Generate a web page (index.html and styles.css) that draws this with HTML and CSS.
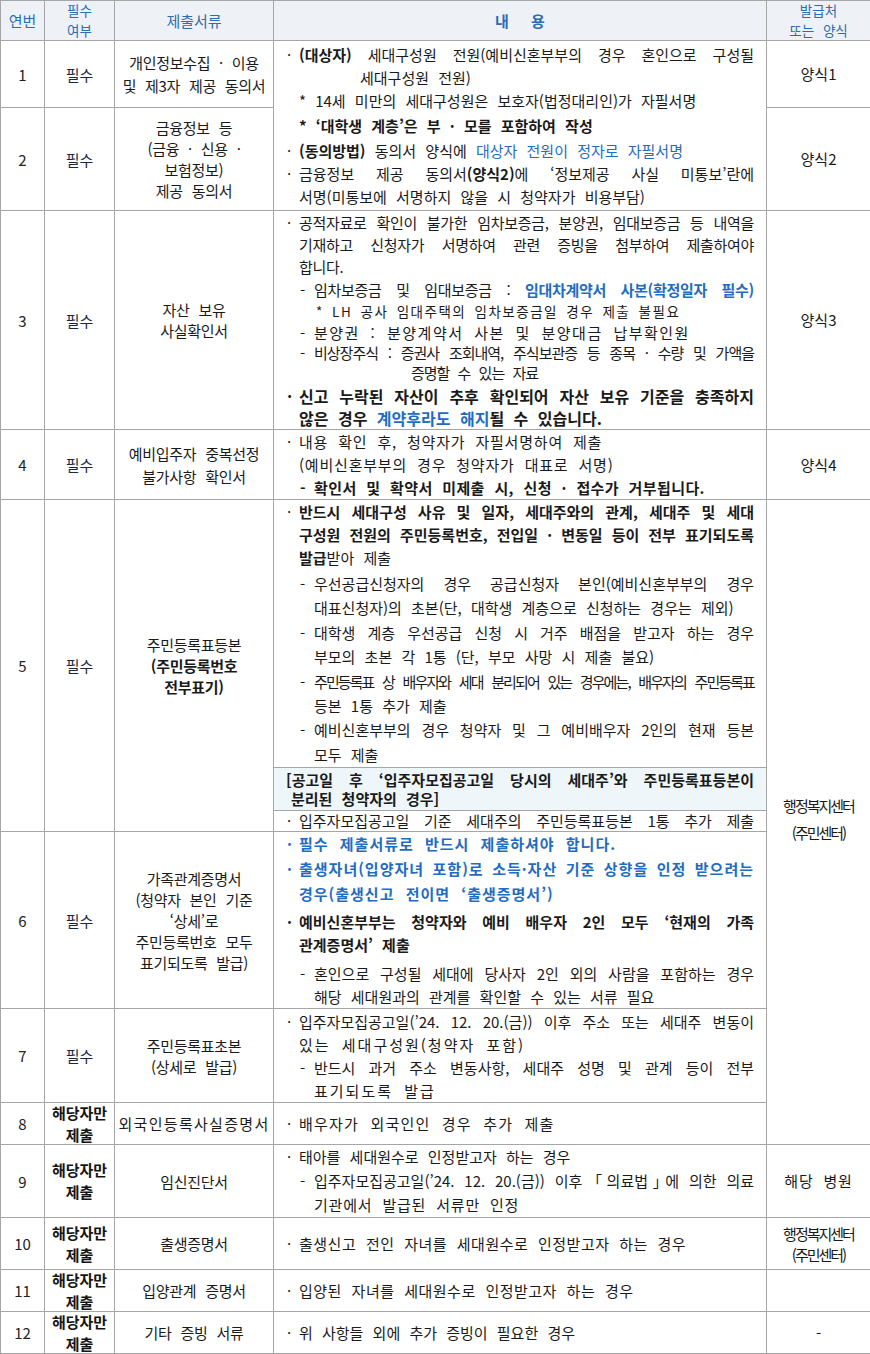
FILE: index.html
```html
<!DOCTYPE html>
<html lang="ko">
<head>
<meta charset="utf-8">
<title>제출서류 안내</title>
<link rel="stylesheet" href="styles.css">
</head>
<body>
<table class="doc">
  <colgroup>
    <col class="c-no"><col class="c-req"><col class="c-name"><col class="c-body"><col class="c-src">
  </colgroup>
  <thead>
    <tr class="r-head">
      <th>연번</th>
      <th class="th2">필수<br>여부</th>
      <th>제출서류</th>
      <th class="th-body">내 용</th>
      <th class="th2">발급처<br>또는 양식</th>
    </tr>
  </thead>
  <tbody>
    <tr class="r1">
      <td class="no">1</td>
      <td class="req">필수</td>
      <td class="name lh23">개인정보수집 · 이용<br>및 제3자 제공 동의서</td>
      <td class="ct lh23" rowspan="2">
        <div class="it"><span class="mk">·</span><div class="tx">
          <span class="l j"><b>(대상자)</b> 세대구성원 전원(예비신혼부부의 경우 혼인으로 구성될</span>
          <span class="l ind-a">세대구성원 전원)</span>
          <span class="l">* 14세 미만의 세대구성원은 보호자(법정대리인)가 자필서명</span>
          <span class="l mt2"><b>* ‘대학생 계층’은 부 · 모를 포함하여 작성</b></span>
        </div></div>
        <div class="it mt2"><span class="mk">·</span><div class="tx">
          <span class="l"><b>(동의방법)</b> 동의서 양식에 <span class="blue">대상자 전원이 정자로 자필서명</span></span>
        </div></div>
        <div class="it"><span class="mk">·</span><div class="tx">
          <span class="l j">금융정보 제공 동의서<b>(양식2)</b>에 ‘정보제공 사실 미통보’란에</span>
          <span class="l">서명(미통보에 서명하지 않을 시 청약자가 비용부담)</span>
        </div></div>
      </td>
      <td class="src">양식1</td>
    </tr>
    <tr class="r2">
      <td class="no">2</td>
      <td class="req">필수</td>
      <td class="name">금융정보 등<br>(금융 · 신용 ·<br>보험정보)<br>제공 동의서</td>
      <td class="src">양식2</td>
    </tr>
    <tr class="r3">
      <td class="no">3</td>
      <td class="req">필수</td>
      <td class="name">자산 보유<br>사실확인서</td>
      <td class="ct">
        <div class="it lh22 tight"><span class="mk">·</span><div class="tx">
          <span class="l j">공적자료로 확인이 불가한 임차보증금, 분양권, 임대보증금 등 내역을</span>
          <span class="l j">기재하고 신청자가 서명하여 관련 증빙을 첨부하여 제출하여야</span>
          <span class="l">합니다.</span>
          <div class="it sub lh23"><span class="mk">-</span><div class="tx">
            <span class="l j">임차보증금 및 임대보증금 : <b class="blue">임대차계약서 사본(확정일자 필수)</b></span>
          </div></div>
          <span class="l note lh21">* LH 공사 임대주택의 임차보증금일 경우 제출 불필요</span>
          <div class="it sub lh21 wide15"><span class="mk">-</span><div class="tx">
            <span class="l">분양권 : 분양계약서 사본 및 분양대금 납부확인원</span>
          </div></div>
          <div class="it sub lh205 cond1"><span class="mk">-</span><div class="tx">
            <span class="l j">비상장주식 : 증권사 조회내역, 주식보관증 등 종목 · 수량 및 가액을</span>
            <span class="l ind-b">증명할 수 있는 자료</span>
          </div></div>
        </div></div>
        <div class="it lh22 mt1 big"><span class="mk">·</span><div class="tx">
          <span class="l j">신고 누락된 자산이 추후 확인되어 자산 보유 기준을 충족하지</span>
          <span class="l">않은 경우 <span class="blue">계약후라도 해지</span>될 수 있습니다.</span>
        </div></div>
      </td>
      <td class="src">양식3</td>
    </tr>
    <tr class="r4">
      <td class="no">4</td>
      <td class="req">필수</td>
      <td class="name lh23">예비입주자 중복선정<br>불가사항 확인서</td>
      <td class="ct lh23 wide1">
        <div class="it"><span class="mk">·</span><div class="tx">
          <span class="l">내용 확인 후, 청약자가 자필서명하여 제출</span>
          <span class="l">(예비신혼부부의 경우 청약자가 대표로 서명)</span>
          <div class="it sub"><span class="mk"><b>-</b></span><div class="tx">
            <span class="l slim"><b>확인서 및 확약서 미제출 시, 신청 · 접수가 거부됩니다.</b></span>
          </div></div>
        </div></div>
      </td>
      <td class="src">양식4</td>
    </tr>
    <tr class="r5a">
      <td class="no" rowspan="3">5</td>
      <td class="req" rowspan="3">필수</td>
      <td class="name" rowspan="3">주민등록표등본<br><b>(주민등록번호<br>전부표기)</b></td>
      <td class="ct">
        <div class="it lh23"><span class="mk">·</span><div class="tx">
          <span class="l j"><b>반드시 세대구성 사유 및 일자, 세대주와의 관계, 세대주 및 세대</b></span>
          <span class="l j"><b>구성원 전원의 주민등록번호, 전입일 · 변동일 등이 전부 표기되도록</b></span>
          <span class="l"><b>발급</b>받아 제출</span>
          <div class="subs">
            <div class="it sub"><span class="mk">-</span><div class="tx">
              <span class="l j">우선공급신청자의 경우 공급신청자 본인(예비신혼부부의 경우</span>
              <span class="l">대표신청자)의 초본(단, 대학생 계층으로 신청하는 경우는 제외)</span>
            </div></div>
            <div class="it sub"><span class="mk">-</span><div class="tx">
              <span class="l j">대학생 계층 우선공급 신청 시 거주 배점을 받고자 하는 경우</span>
              <span class="l">부모의 초본 각 1통 (단, 부모 사망 시 제출 불요)</span>
            </div></div>
            <div class="it sub"><span class="mk">-</span><div class="tx">
              <span class="l j cond2">주민등록표 상 배우자와 세대 분리되어 있는 경우에는, 배우자의 주민등록표</span>
              <span class="l cond3">등본 1통 추가 제출</span>
            </div></div>
            <div class="it sub"><span class="mk">-</span><div class="tx">
              <span class="l j">예비신혼부부의 경우 청약자 및 그 예비배우자 2인의 현재 등본</span>
              <span class="l">모두 제출</span>
            </div></div>
          </div>
        </div></div>
      </td>
      <td class="src merged" rowspan="6">행정복지센터<br>(주민센터)</td>
    </tr>
    <tr class="r5b">
      <td class="box">
        <span class="l j">[공고일 후 ‘입주자모집공고일 당시의 세대주’와 주민등록표등본이</span>
        <span class="l ind-c">분리된 청약자의 경우]</span>
      </td>
    </tr>
    <tr class="r5c">
      <td class="ct lh20">
        <div class="it"><span class="mk">·</span><div class="tx">
          <span class="l j">입주자모집공고일 기준 세대주의 주민등록표등본 1통 추가 제출</span>
        </div></div>
      </td>
    </tr>
    <tr class="r6">
      <td class="no">6</td>
      <td class="req">필수</td>
      <td class="name">가족관계증명서<br>(청약자 본인 기준<br>‘상세’로<br>주민등록번호 모두<br>표기되도록 발급)</td>
      <td class="ct">
        <div class="it lh24 blue bold wide05"><span class="mk">·</span><div class="tx">
          <span class="l">필수 제출서류로 반드시 제출하셔야 합니다.</span>
        </div></div>
        <div class="it lh25 blue bold wide05"><span class="mk">·</span><div class="tx">
          <span class="l j">출생자녀(입양자녀 포함)로 소득·자산 기준 상향을 인정 받으려는</span>
          <span class="l">경우(출생신고 전이면 ‘출생증명서’)</span>
        </div></div>
        <div class="it lh23 bold mt4"><span class="mk">·</span><div class="tx">
          <span class="l j">예비신혼부부는 청약자와 예비 배우자 2인 모두 ‘현재의 가족</span>
          <span class="l">관계증명서’ 제출</span>
        </div></div>
        <div class="it lh23 mt6"><span class="mk"></span><div class="tx">
          <div class="it sub"><span class="mk">-</span><div class="tx">
            <span class="l j">혼인으로 구성될 세대에 당사자 2인 외의 사람을 포함하는 경우</span>
            <span class="l">해당 세대원과의 관계를 확인할 수 있는 서류 필요</span>
          </div></div>
        </div></div>
      </td>
    </tr>
    <tr class="r7">
      <td class="no">7</td>
      <td class="req">필수</td>
      <td class="name">주민등록표초본<br>(상세로 발급)</td>
      <td class="ct lh23">
        <div class="it"><span class="mk">·</span><div class="tx">
          <span class="l j">입주자모집공고일(’24. 12. 20.(금)) 이후 주소 또는 세대주 변동이</span>
          <span class="l wide2">있는 세대구성원(청약자 포함)</span>
          <div class="it sub"><span class="mk">-</span><div class="tx">
            <span class="l j">반드시 과거 주소 변동사항, 세대주 성명 및 관계 등이 전부</span>
            <span class="l wide2">표기되도록 발급</span>
          </div></div>
        </div></div>
      </td>
    </tr>
    <tr class="r8">
      <td class="no">8</td>
      <td class="req opt"><span class="opt-in">해당자만<br>제출</span></td>
      <td class="name wide13">외국인등록사실증명서</td>
      <td class="ct wide12">
        <div class="it"><span class="mk">·</span><div class="tx">
          <span class="l">배우자가 외국인인 경우 추가 제출</span>
        </div></div>
      </td>
    </tr>
    <tr class="r9">
      <td class="no">9</td>
      <td class="req opt"><span class="opt-in">해당자만<br>제출</span></td>
      <td class="name">임신진단서</td>
      <td class="ct lh24">
        <div class="it"><span class="mk">·</span><div class="tx">
          <span class="l">태아를 세대원수로 인정받고자 하는 경우</span>
          <div class="it sub"><span class="mk">-</span><div class="tx">
            <span class="l j">입주자모집공고일(’24. 12. 20.(금)) 이후「의료법<span class="rb">」</span>에 의한 의료</span>
            <span class="l wide1">기관에서 발급된 서류만 인정</span>
          </div></div>
        </div></div>
      </td>
      <td class="src wide1">해당 병원</td>
    </tr>
    <tr class="r10">
      <td class="no">10</td>
      <td class="req opt"><span class="opt-in">해당자만<br>제출</span></td>
      <td class="name">출생증명서</td>
      <td class="ct wide05n">
        <div class="it"><span class="mk">·</span><div class="tx">
          <span class="l">출생신고 전인 자녀를 세대원수로 인정받고자 하는 경우</span>
        </div></div>
      </td>
      <td class="src small-src">행정복지센터<br>(주민센터)</td>
    </tr>
    <tr class="r11">
      <td class="no">11</td>
      <td class="req opt"><span class="opt-in">해당자만<br>제출</span></td>
      <td class="name">입양관계 증명서</td>
      <td class="ct wide05n">
        <div class="it"><span class="mk">·</span><div class="tx">
          <span class="l">입양된 자녀를 세대원수로 인정받고자 하는 경우</span>
        </div></div>
      </td>
      <td class="src"></td>
    </tr>
    <tr class="r12">
      <td class="no">12</td>
      <td class="req opt"><span class="opt-in">해당자만<br>제출</span></td>
      <td class="name">기타 증빙 서류</td>
      <td class="ct">
        <div class="it"><span class="mk">·</span><div class="tx">
          <span class="l">위 사항들 외에 추가 증빙이 필요한 경우</span>
        </div></div>
      </td>
      <td class="src">-</td>
    </tr>
  </tbody>
</table>
</body>
</html>
```

FILE: styles.css
```css
* { box-sizing: border-box; }
html, body { margin: 0; padding: 0; background: #ffffff; }
body {
  font-family: "Noto Sans CJK KR", "Noto Sans", sans-serif;
  color: #1a1a1a;
}

.doc {
  width: 870px;
  border-collapse: collapse;
  table-layout: fixed;
  font-size: 15px;
  letter-spacing: 0;
  word-spacing: 5px;
  line-height: 21px;
}
.c-no { width: 44px; }
.c-req { width: 70px; }
.c-name { width: 159px; }
.c-body { width: 493px; }
.c-src { width: 104px; }

th, td {
  border: 1px solid #a6a6a6;
  padding: 0;
  text-align: center;
  vertical-align: middle;
}
th {
  background: #eef2f7;
  color: #2b6cb6;
  font-weight: 400;
  line-height: 20px;
}
.th2 { font-size: 13.5px; line-height: 19.5px; }
.th-body { font-weight: 700; word-spacing: 18px; }

.r-head { height: 39px; }
.r1 { height: 67px; }
.r2 { height: 103px; }
.r3 { height: 219px; }
.r4 { height: 69px; }
.r5a { height: 268px; }
.r5b { height: 43px; }
.r5c { height: 21px; }
.r6 { height: 177px; }
.r7 { height: 94px; }
.r8 { height: 42px; }
.r9 { height: 73px; }
.r10 { height: 52px; }
.r11 { height: 42px; }
.r12 { height: 42px; }

.no { color: #222; }
.req { color: #1d2846; }
.opt { font-weight: 700; color: #141414; }
.opt-in { display: block; line-height: 22px; margin: -2px 0; }
.name { line-height: 21px; letter-spacing: -0.3px; }
.src { line-height: 22px; }
.merged { letter-spacing: -2px; word-spacing: 0; line-height: 27px; padding-bottom: 6px; }
.small-src { letter-spacing: -2px; word-spacing: 0; line-height: 21px; }

/* content column */
.ct { text-align: left; padding: 0 12px 0 13px; }
.it { display: flex; }
.mk { flex: none; width: 12px; }
.tx { flex: 1; min-width: 0; }
.sub > .mk { width: 15px; padding-left: 1px; }
.l { display: block; }
.j { text-align: justify; text-align-last: justify; word-spacing: 1px; }

.subs { margin-top: 3px; line-height: 24.4px; }

.box {
  background: #eef6fa;
  text-align: left;
  padding: 0 12px 0 12px;
  font-weight: 700;
  line-height: 19.5px;
}

b, .bold { font-weight: 700; }
.blue { color: #1f6cc0; }

.lh20 { line-height: 20px; }
.lh21 { line-height: 21px; }
.lh205 { line-height: 20.5px; }
.lh22 { line-height: 22px; }
.lh23 { line-height: 23px; }
.lh24 { line-height: 24px; }
.lh25 { line-height: 25px; }

.mt1 { margin-top: 1px; }
.mt2 { margin-top: 2px; }
.mt4 { margin-top: 4px; }
.mt6 { margin-top: 6px; }

.ind-a { padding-left: 61px; }
.ind-b { padding-left: 97px; }
.ind-c { padding-left: 5px; }

.rb { letter-spacing: -7px; }

.note { padding-left: 17px; font-size: 13.5px; letter-spacing: 1.5px; word-spacing: 3px; }
.tight { letter-spacing: -0.3px; }
.big { font-size: 16px; font-weight: 700; }
.slim { letter-spacing: 0.4px; }
.wide05 { letter-spacing: 1px; word-spacing: 6px; }
.wide05n { letter-spacing: 0.5px; }
.wide1 { letter-spacing: 0.8px; }
.wide12 { letter-spacing: 1.2px; word-spacing: 6px; }
.wide13 { letter-spacing: 1.3px; }
.wide15 { letter-spacing: 1.5px; }
.wide2 { letter-spacing: 2px; }
.cond1 { letter-spacing: -1px; }
.cond2 { letter-spacing: -1.9px; word-spacing: 1px; }
.cond3 { letter-spacing: 0; }
```
